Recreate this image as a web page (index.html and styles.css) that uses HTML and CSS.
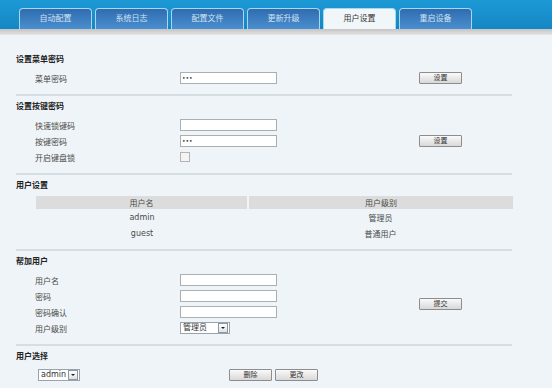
FILE: index.html
```html
<!DOCTYPE html>
<html lang="zh-CN">
<head>
  <meta charset="UTF-8">
  <title>用户设置</title>
  <link rel="stylesheet" href="styles.css">
</head>
<body>
  <div class="topbar">
    <ul class="tabs">
      <li>自动配置</li>
      <li>系统日志</li>
      <li>配置文件</li>
      <li>更新升级</li>
      <li class="active">用户设置</li>
      <li>重启设备</li>
    </ul>
  </div>
  <div class="band"></div>

  <div class="content">
    <!-- 设置菜单密码 -->
    <div class="section first">
      <div class="title">设置菜单密码</div>
      <div class="body">
        <div class="rows">
          <div class="row"><span class="label">菜单密码</span><span class="input pwd">•••</span></div>
        </div>
        <span class="btn">设置</span>
      </div>
    </div>

    <!-- 设置按键密码 -->
    <div class="section">
      <div class="title">设置按键密码</div>
      <div class="body">
        <div class="rows">
          <div class="row"><span class="label">快速锁键码</span><span class="input"></span></div>
          <div class="row"><span class="label">按键密码</span><span class="input pwd">•••</span></div>
          <div class="row"><span class="label">开启键盘锁</span><span class="check"></span></div>
        </div>
        <span class="btn">设置</span>
      </div>
    </div>

    <!-- 用户设置 -->
    <div class="section">
      <div class="title">用户设置</div>
      <table class="users">
        <tr><th>用户名</th><th>用户级别</th></tr>
        <tr><td>admin</td><td>管理员</td></tr>
        <tr><td>guest</td><td>普通用户</td></tr>
      </table>
    </div>

    <!-- 帮加用户 -->
    <div class="section">
      <div class="title">帮加用户</div>
      <div class="body">
        <div class="rows">
          <div class="row"><span class="label">用户名</span><span class="input"></span></div>
          <div class="row"><span class="label">密码</span><span class="input"></span></div>
          <div class="row"><span class="label">密码确认</span><span class="input"></span></div>
          <div class="row"><span class="label">用户级别</span><span class="select wide">管理员<i></i></span></div>
        </div>
        <span class="btn">提交</span>
      </div>
    </div>

    <!-- 用户选择 -->
    <div class="section last">
      <div class="title">用户选择</div>
      <div class="pick">
        <span class="select">admin<i></i></span>
        <span class="btn">删除</span>
        <span class="btn">更改</span>
      </div>
    </div>
  </div>
</body>
</html>
```

FILE: styles.css
```css
/* chung */
body {
  margin: 0;
  font-family: "DejaVu Sans", "Noto Sans CJK SC", sans-serif;
  font-size: 8px;
  color: #4a4a4a;
  background: #eef4f7;
}
/* thanh tab */
.topbar {
  height: 29px;
  background: linear-gradient(to bottom, #1c9ad6, #1686c4);
}
.tabs {
  list-style: none;
  margin: 0;
  padding: 8px 0 0 19px;
  display: flex;
  gap: 3px;
}
.tabs li {
  width: 71px;
  height: 20px;
  line-height: 20px;
  text-align: center;
  color: #d2e2f0;
  background: linear-gradient(to bottom, #2f6cb0, #4a8fd0);
  border: 1px solid #a7d8f2;
  border-bottom: none;
  border-radius: 4px 4px 0 0;
}
.tabs li.active {
  background: #f1f6f9;
  color: #333;
}
.band {
  height: 6px;
  background: linear-gradient(to bottom, #c4c4c4, #e4e4e4);
}
/* noi dung */
.content {
  padding: 0 0 0 16px;
}
.section {
  width: 496px;
  padding: 3px 0 8px;
  border-bottom: 2px solid #d6dee2;
}
.section.first {
  padding-top: 17px;
}
.section.last {
  border-bottom: none;
}
.title {
  height: 16px;
  line-height: 16px;
  font-weight: bold;
  color: #222;
  margin-bottom: 2px;
}
.body {
  display: flex;
  align-items: center;
}
.rows {
  width: 403px;
}
.row {
  height: 16px;
  display: flex;
  align-items: center;
}
.label {
  width: 145px;
  padding-left: 19px;
}
.input {
  width: 94px;
  height: 10px;
  line-height: 10px;
  background: #fff;
  border: 1px solid #a9b0b5;
  padding: 0 0 0 1px;
  font-size: 6px;
  color: #333;
}
.check {
  width: 8px;
  height: 8px;
  border: 1px solid #b4b4b4;
  background: #f4f4f4;
}
.btn {
  display: inline-block;
  width: 41px;
  height: 10px;
  line-height: 10px;
  text-align: center;
  font-size: 7px;
  color: #333;
  border: 1px solid #8d8d8d;
  border-radius: 1px;
  background: linear-gradient(to bottom, #fafafa, #d8d8d8);
}
/* bang user */
.users {
  margin-left: 20px;
  width: 477px;
  border-collapse: collapse;
}
.users th {
  height: 13px;
  font-weight: normal;
  background: #dcdcdc;
  border-left: 2px solid #eef4f7;
  padding: 0;
}
.users th:first-child {
  width: 211px;
  border-left: none;
}
.users td {
  height: 16px;
  text-align: center;
  padding: 0;
}
/* select */
.select {
  display: inline-flex;
  align-items: center;
  justify-content: space-between;
  height: 10px;
  line-height: 10px;
  padding: 0 1px 0 2px;
  border: 1px solid #9aa4ab;
  background: #fff;
  color: #333;
  gap: 2px;
}
.select.wide {
  width: 45px;
}
.select i {
  width: 8px;
  height: 8px;
  border: 1px solid #8f989e;
  background: linear-gradient(to bottom, #fff, #dfe3e6);
  position: relative;
}
.select i::after {
  content: "";
  position: absolute;
  left: 2px;
  top: 3px;
  border-left: 2px solid transparent;
  border-right: 2px solid transparent;
  border-top: 2px solid #222;
}
.pick {
  height: 16px;
  display: flex;
  align-items: center;
  padding-left: 22px;
}
.pick .select {
  margin-right: 149px;
}
.pick .btn {
  margin-right: 3px;
}
```
